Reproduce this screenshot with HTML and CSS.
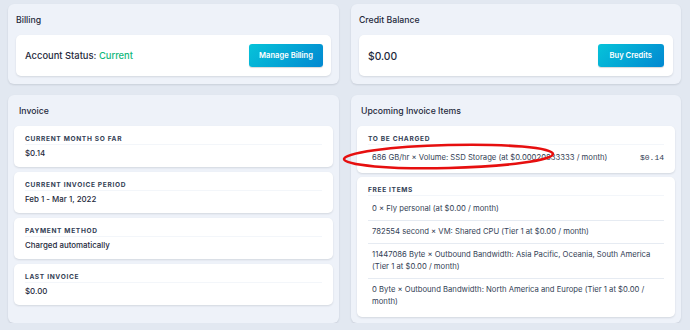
FILE: index.html
```html
<!DOCTYPE html>
<html lang="en">
<head>
    <meta charset="UTF-8">
    <meta name="viewport" content="width=device-width, initial-scale=1.0">
    <title>Billing</title>
    <link rel="stylesheet" href="styles.css">
</head>
<body>

    <div class="page">
        <section class="card card-top">
            <h3 class="card-title">Billing</h3>
            <div class="panel panel-row">
                <span class="status">Account Status: <span class="ok">Current</span></span>
                <button class="btn">Manage Billing</button>
            </div>
        </section>

        <section class="card card-top">
            <h3 class="card-title">Credit Balance</h3>
            <div class="panel panel-row">
                <span class="balance">$0.00</span>
                <button class="btn">Buy Credits</button>
            </div>
        </section>

        <section class="card card-list">
            <h3 class="card-title">Invoice</h3>
            <div class="stack">
                <div class="panel field">
                    <div class="label">Current Month So Far</div>
                    <div class="value">$0.14</div>
                </div>
                <div class="panel field">
                    <div class="label">Current Invoice Period</div>
                    <div class="value">Feb 1 - Mar 1, 2022</div>
                </div>
                <div class="panel field">
                    <div class="label">Payment Method</div>
                    <div class="value">Charged automatically</div>
                </div>
                <div class="panel field">
                    <div class="label">Last Invoice</div>
                    <div class="value">$0.00</div>
                </div>
            </div>
        </section>

        <section class="card card-list">
            <h3 class="card-title">Upcoming Invoice Items</h3>
            <div class="stack stack-tight">
                <div class="panel field charged">
                    <div class="label">To Be Charged</div>
                    <ul class="items">
                        <li class="item item-priced">
                            <span>686 GB/hr × Volume: SSD Storage (at $0.00020833333 / month)</span>
                            <span class="price">$0.14</span>
                        </li>
                    </ul>
                    <svg class="circled" width="215" height="29" viewBox="0 0 215 29">
                        <ellipse cx="107.5" cy="14.5" rx="104.5" ry="11.5" transform="rotate(-1.4 107.5 14.5)"/>
                    </svg>
                </div>
                <div class="panel field">
                    <div class="label">Free Items</div>
                    <ul class="items">
                        <li class="item">0 × Fly personal (at $0.00 / month)</li>
                        <li class="item">782554 second × VM: Shared CPU (Tier 1 at $0.00 / month)</li>
                        <li class="item">11447086 Byte × Outbound Bandwidth: Asia Pacific, Oceania, South America (Tier 1 at $0.00 / month)</li>
                        <li class="item">0 Byte × Outbound Bandwidth: North America and Europe (Tier 1 at $0.00 / month)</li>
                    </ul>
                </div>
            </div>
        </section>
    </div>

</body>
</html>
```

FILE: styles.css
```css
body {
    margin: 0;
    font-family: Inter, "Noto Sans", sans-serif;
    background-color: #e2e8f1;
    color: #1e293b;
}
.page {
    display: grid;
    grid-template-columns: 331px 330px;
    column-gap: 12px;
    row-gap: 11px;
    padding: 4px 9px 0 8px;
}
.card {
    background: #eef2f9;
    border-radius: 6px;
    box-shadow: 0px 1px 2px rgba(15, 23, 42, 0.12);
}
.card-top {
    padding: 10px 8px 8px;
}
.card-list {
    padding: 10px 6px 6px;
}
.card-title {
    margin: 0 0 9px;
    font-size: 8.7px;
    line-height: 12px;
    font-weight: 500;
}
.card-list .card-title {
    padding-left: 5px;
}
.card-list:last-child .card-title {
    padding-left: 4px;
}
.panel {
    background: white;
    border-radius: 5px;
    box-shadow: 0px 1px 2px rgba(15, 23, 42, 0.12);
}
.panel-row {
    height: 41px;
    box-sizing: border-box;
    padding: 0 8px 0 9px;
    display: flex;
    align-items: center;
    justify-content: space-between;
}
.status {
    font-size: 9.4px;
    font-weight: 500;
}
.ok {
    color: #10b77a;
}
.balance {
    font-size: 10.3px;
    font-weight: 500;
}
.btn {
    height: 23px;
    padding: 0 10px;
    border: none;
    border-radius: 3px;
    background: linear-gradient(135deg, #06c3d9, #0288d1);
    color: white;
    font-family: Inter, sans-serif;
    font-size: 7.6px;
    font-weight: 600;
    cursor: pointer;
    box-shadow: 0px 1px 1px rgba(0, 0, 0, 0.15);
}
.card-top:nth-child(2) .btn {
    padding: 0 12px;
    margin-right: 1px;
}
.stack {
    display: flex;
    flex-direction: column;
    gap: 5px;
}
.stack-tight {
    gap: 4px;
}
.field {
    padding: 8px 11px 8px;
    height: 41px;
    box-sizing: border-box;
}
.label {
    font-size: 6.6px;
    line-height: 10px;
    font-weight: 700;
    text-transform: uppercase;
    letter-spacing: 0.1em;
    color: #334155;
    border-bottom: 1px solid #f3f6fa;
}
.value {
    margin-top: 2px;
    font-size: 7.9px;
    line-height: 12px;
    font-weight: 500;
}
.charged,
.card-list:last-child .field {
    height: auto;
    padding-bottom: 4px;
    position: relative;
}
.items {
    list-style: none;
    margin: 0;
    padding: 2px 0 0;
}
.item {
    padding: 5px 8px 5px 4px;
    font-size: 7.7px;
    line-height: 12px;
    color: #334155;
    border-bottom: 1px solid #e6ebf2;
}
.item:last-child {
    border-bottom: none;
}
.item-priced {
    display: flex;
    justify-content: space-between;
    padding-right: 0;
}
.price {
    font-family: "Liberation Mono", monospace;
    font-size: 8px;
}
.circled {
    position: absolute;
    left: -16px;
    top: 16px;
    overflow: visible;
}
.circled ellipse {
    fill: none;
    stroke: #e60f0f;
    stroke-width: 2.6;
}
```
